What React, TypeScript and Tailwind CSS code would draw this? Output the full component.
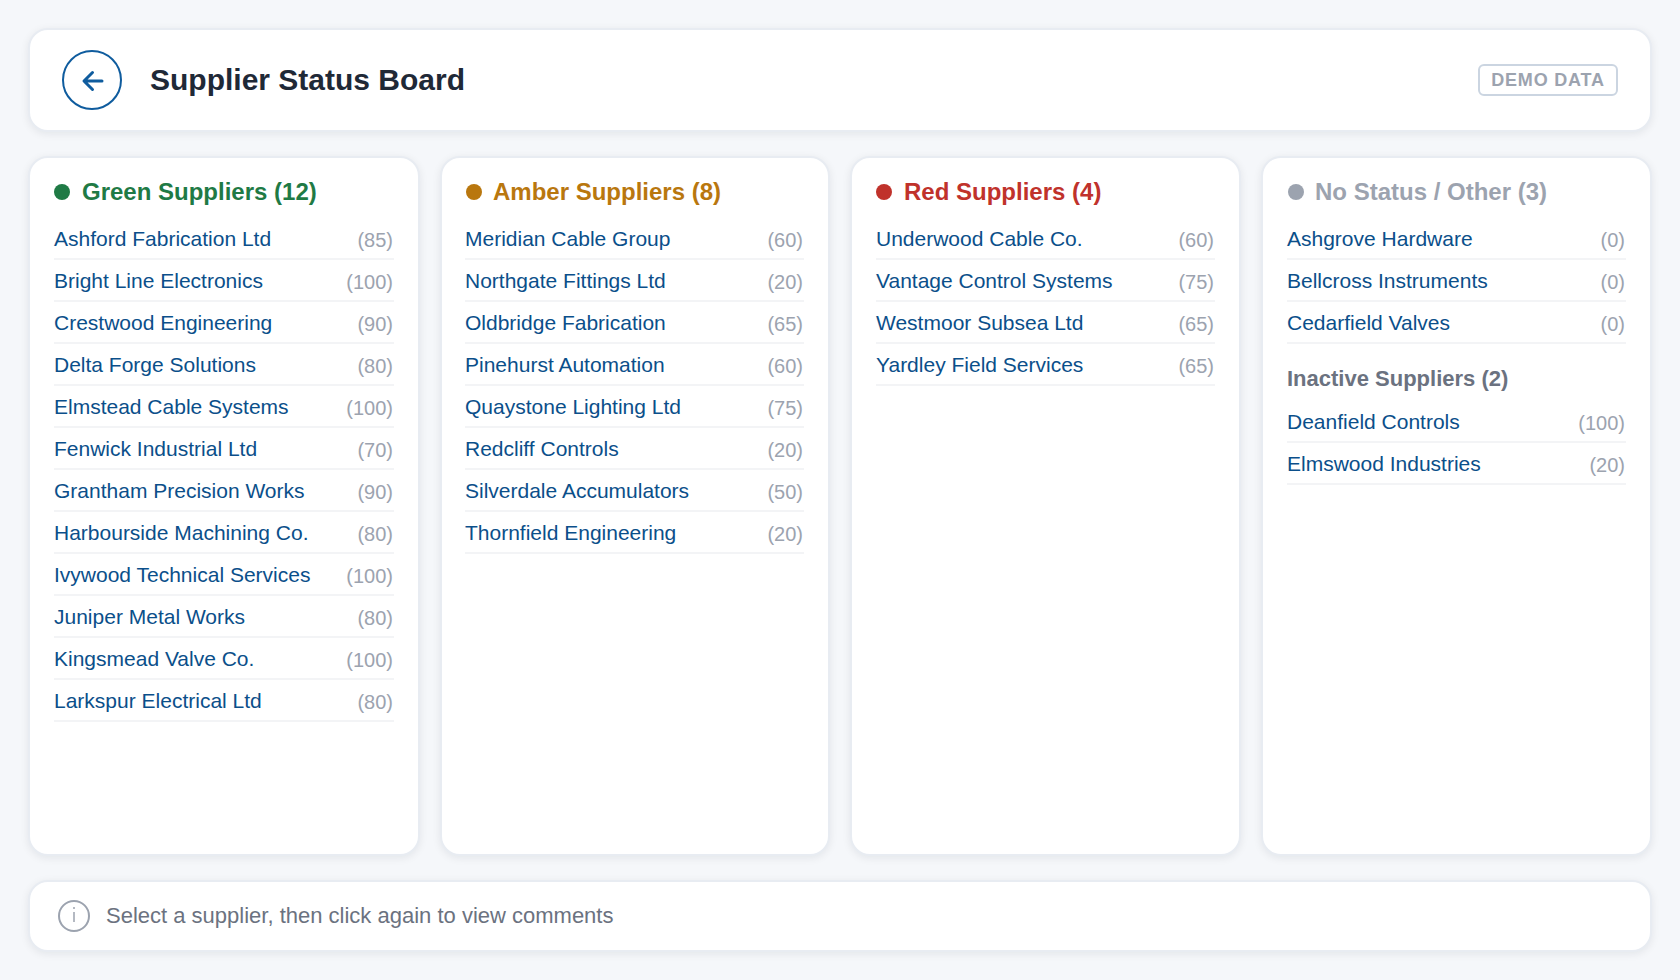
import React from "react";

type S = [string, number];
const green: S[] = [["Ashford Fabrication Ltd",85],["Bright Line Electronics",100],["Crestwood Engineering",90],["Delta Forge Solutions",80],["Elmstead Cable Systems",100],["Fenwick Industrial Ltd",70],["Grantham Precision Works",90],["Harbourside Machining Co.",80],["Ivywood Technical Services",100],["Juniper Metal Works",80],["Kingsmead Valve Co.",100],["Larkspur Electrical Ltd",80]];
const amber: S[] = [["Meridian Cable Group",60],["Northgate Fittings Ltd",20],["Oldbridge Fabrication",65],["Pinehurst Automation",60],["Quaystone Lighting Ltd",75],["Redcliff Controls",20],["Silverdale Accumulators",50],["Thornfield Engineering",20]];
const red: S[] = [["Underwood Cable Co.",60],["Vantage Control Systems",75],["Westmoor Subsea Ltd",65],["Yardley Field Services",65]];
const other: S[] = [["Ashgrove Hardware",0],["Bellcross Instruments",0],["Cedarfield Valves",0]];
const inactive: S[] = [["Deanfield Controls",100],["Elmswood Industries",20]];

function Rows({ items }: { items: S[] }) {
  return (
    <ul>
      {items.map(([n, v]) => (
        <li key={n} className="flex h-[42px] items-center justify-between border-b-2 border-[#f3f4f6] pr-[1px] leading-none">
          <span className="text-[21px] text-[#0b4f8a]">{n}</span>
          <span className="mt-[4px] text-[20px] text-[#9ca3af]">({v})</span>
        </li>
      ))}
    </ul>
  );
}

function Column({ dot, text, title, items, pad, head, children }: { dot: string; text: string; title: string; items: S[]; pad: string; head: string; children?: React.ReactNode }) {
  return (
    <section className={`min-w-0 rounded-[20px] border-2 border-[#e8ecf2] bg-white pr-[24px] pt-[17px] shadow-[0_2px_8px_rgba(15,23,42,0.08)] ${pad}`}>
      <h2 className={`mb-[9px] flex h-[34px] items-center text-[24px] font-bold ${head} ${text}`}>
        <span className={`h-[16px] w-[16px] rounded-full ${dot}`} />
        {title}
      </h2>
      <Rows items={items} />
      {children}
    </section>
  );
}

export default function App() {
  return (
    <div className="flex h-[980px] flex-col gap-[24px] bg-[#f5f7fa] p-[28px] font-['Liberation_Sans',Arial,sans-serif]">
      <header className="flex h-[104px] shrink-0 items-center justify-between rounded-[20px] border-2 border-[#e8ecf2] bg-white px-[32px] shadow-[0_2px_8px_rgba(15,23,42,0.08)]">
        <div className="flex items-center gap-[28px]">
          <button className="flex h-[60px] w-[60px] items-center justify-center rounded-full border-2 border-[#0f5c9e] text-[#0f5c9e]">
            <svg width="26" height="26" viewBox="0 0 26 26" fill="none" stroke="currentColor" strokeWidth="3" strokeLinecap="round" strokeLinejoin="round">
              <path d="M23 14H5.500M13.500 5.500L5 14L13.500 22.500" />
            </svg>
          </button>
          <h1 className="-mt-[2px] text-[30px] font-bold text-[#1f2937]">Supplier Status Board</h1>
        </div>
        <span className="flex h-[32px] w-[140px] items-center justify-center rounded-[6px] border-2 border-[#cbd5e1] text-[18px] font-bold tracking-[0.8px] text-[#9ca3af]">DEMO DATA</span>
      </header>

      <main className="grid min-h-0 flex-1 grid-cols-[392px_390px_391px_391px] gap-[20px]">
        <Column pad="pl-[24px]" head="gap-[12px]" dot="bg-[#1f7a45]" text="text-[#1f7a45]" title="Green Suppliers (12)" items={green} />
        <Column pad="pl-[23px]" head="gap-[11px] pl-[1px]" dot="bg-[#b9770e]" text="text-[#b9770e]" title="Amber Suppliers (8)" items={amber} />
        <Column pad="pl-[24px]" head="gap-[12px]" dot="bg-[#c0322b]" text="text-[#c0322b]" title="Red Suppliers (4)" items={red} />
        <Column pad="pl-[24px]" head="gap-[11px] pl-[1px]" dot="bg-[#9ca3af]" text="text-[#9ca3af]" title="No Status / Other (3)" items={other}>
          <h3 className="mb-[9px] mt-[20px] flex h-[28px] items-center text-[22px] font-bold text-[#6b7280]">Inactive Suppliers (2)</h3>
          <Rows items={inactive} />
        </Column>
      </main>

      <footer className="flex h-[72px] shrink-0 items-center gap-[16px] rounded-[20px] border-2 border-[#e8ecf2] bg-white pl-[28px] shadow-[0_2px_8px_rgba(15,23,42,0.08)]">
        <span className="flex h-[32px] w-[32px] items-center justify-center">
          <svg width="32" height="32" viewBox="0 0 32 32" fill="none" stroke="#9ca3af">
            <circle cx="16" cy="16" r="15" strokeWidth="2" />
            <path d="M16 12v10M16 7v2" strokeWidth="1.500" />
          </svg>
        </span>
        <span className="pb-[2px] text-[22px] text-[#6b7280]">Select a supplier, then click again to view comments</span>
      </footer>
    </div>
  );
}
